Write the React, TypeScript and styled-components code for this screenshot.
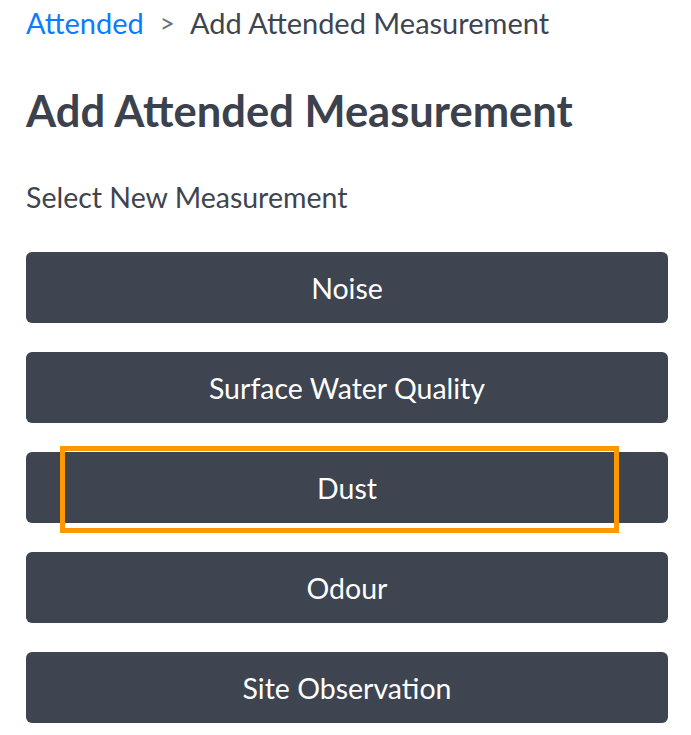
import React from "react";
import styled, { createGlobalStyle } from "styled-components";

const GlobalStyle = createGlobalStyle`
  html, body {
    margin: 0;
    padding: 0;
    background: #fff;
  }
  body {
    font-family: Lato, "Liberation Sans", sans-serif;
    color: #3e4450;
  }
`;

const Page = styled.main`
  display: flex;
  flex-direction: column;
  padding: 6px 23px 0 26px;
`;

const Breadcrumb = styled.nav`
  display: flex;
  align-items: center;
  font-size: 29px;
  line-height: 34px;
  color: #3e4450;
`;

const Crumb = styled.a`
  color: #0a7cff;
  text-decoration: none;
`;

const Sep = styled.span`
  font-size: 26px;
  line-height: 34px;
  color: #6c727c;
  margin: 0 15px 0 16px;
`;

const Title = styled.h1`
  margin: 44px 0 0;
  font-size: 43.5px;
  line-height: 52px;
  font-weight: 700;
  color: #3b414d;
`;

const Label = styled.p`
  margin: 44px 0 0;
  font-size: 28.5px;
  line-height: 34px;
  color: #3e4450;
`;

const List = styled.div`
  display: flex;
  flex-direction: column;
  gap: 29px;
  margin-top: 38px;
`;

const Slot = styled.div`
  position: relative;
`;

const MeasureBtn = styled.button`
  display: flex;
  align-items: center;
  justify-content: center;
  width: 100%;
  height: 71px;
  border: none;
  border-radius: 6px;
  background: #3e4450;
  color: #fff;
  font-family: Lato, "Liberation Sans", sans-serif;
  font-size: 28.5px;
  cursor: pointer;
`;

const Highlight = styled.div`
  position: absolute;
  left: 34px;
  top: -6px;
  width: 559px;
  height: 87px;
  box-sizing: border-box;
  border: 5px solid #ff9800;
  pointer-events: none;
`;

const items = [
  { label: "Noise" },
  { label: "Surface Water Quality" },
  { label: "Dust", marked: true },
  { label: "Odour" },
  { label: "Site Observation" },
];

export default function App() {
  return (
    <>
      <GlobalStyle />
      <Page>
        <Breadcrumb>
          <Crumb href="#">Attended</Crumb>
          <Sep>&gt;</Sep>
          <span>Add Attended Measurement</span>
        </Breadcrumb>
        <Title>Add Attended Measurement</Title>
        <Label>Select New Measurement</Label>
        <List>
          {items.map((it) => (
            <Slot key={it.label}>
              <MeasureBtn>{it.label}</MeasureBtn>
              {it.marked && <Highlight />}
            </Slot>
          ))}
        </List>
      </Page>
    </>
  );
}
